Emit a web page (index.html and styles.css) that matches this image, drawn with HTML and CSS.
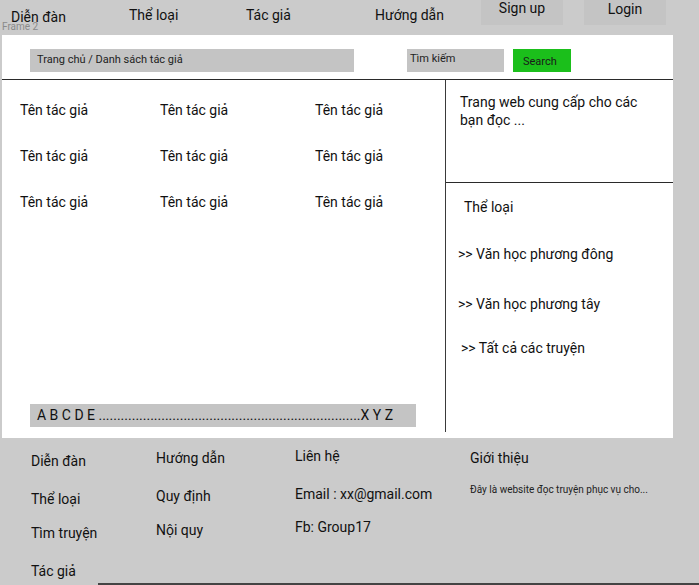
FILE: index.html
```html
<!DOCTYPE html>
<html lang="vi">
<head>
<meta charset="utf-8">
<title>Danh sách tác giả</title>
<link rel="stylesheet" href="styles.css">
</head>
<body>
<div class="page">
  <header class="topbar">
    <a class="nav nav-forum">Diễn đàn</a>
    <a class="nav nav-genre">Thể loại</a>
    <a class="nav nav-author">Tác giả</a>
    <a class="nav nav-guide">Hướng dẫn</a>
    <a class="btn-top btn-signup">Sign up</a>
    <a class="btn-top btn-login">Login</a>
    <span class="frame-label">Frame 2</span>
  </header>

  <main class="frame">
    <div class="toolbar">
      <div class="breadcrumb">Trang chủ / Danh sách tác giả</div>
      <div class="search-input">Tìm kiếm</div>
      <div class="search-btn">Search</div>
    </div>
    <div class="content">
      <section class="authors">
        <div class="author-grid">
          <div class="author">Tên tác giả</div>
          <div class="author">Tên tác giả</div>
          <div class="author">Tên tác giả</div>
          <div class="author">Tên tác giả</div>
          <div class="author">Tên tác giả</div>
          <div class="author">Tên tác giả</div>
          <div class="author">Tên tác giả</div>
          <div class="author">Tên tác giả</div>
          <div class="author">Tên tác giả</div>
        </div>
        <div class="alphabet">A B C D E .......................................................................X Y Z</div>
      </section>
      <aside class="sidebar">
        <div class="about">
          <p class="about-text">Trang web cung cấp cho các bạn đọc ...</p>
        </div>
        <div class="cats">
          <div class="cats-title">Thể loại</div>
          <div class="cat cat-east">&gt;&gt; Văn học phương đông</div>
          <div class="cat cat-west">&gt;&gt; Văn học phương tây</div>
          <div class="cat cat-all">&gt;&gt; Tất cả các truyện</div>
        </div>
      </aside>
    </div>
  </main>

  <footer class="footer">
    <div class="fcol fcol-1">
      <div class="fitem">Diễn đàn</div>
      <div class="fitem">Thể loại</div>
      <div class="fitem">Tìm truyện</div>
      <div class="fitem">Tác giả</div>
    </div>
    <div class="fcol fcol-2">
      <div class="fitem">Hướng dẫn</div>
      <div class="fitem">Quy định</div>
      <div class="fitem">Nội quy</div>
    </div>
    <div class="fcol fcol-3">
      <div class="fitem">Liên hệ</div>
      <div class="fitem">Email : xx@gmail.com</div>
      <div class="fitem">Fb: Group17</div>
    </div>
    <div class="fcol fcol-4">
      <div class="fitem">Giới thiệu</div>
      <div class="fsmall">Đây là website đọc truyện phục vụ cho...</div>
    </div>
  </footer>
  <div class="bottom-line"></div>
</div>
</body>
</html>
```

FILE: styles.css
```css
* { box-sizing: border-box; }
html, body { margin: 0; padding: 0; }
body {
  background: #cbcbcb;
  font-family: Roboto, "Noto Sans", sans-serif;
  color: #111;
  font-size: 14px;
}
.page {
  width: 699px;
  height: 585px;
  overflow: hidden;
  display: flex;
  flex-direction: column;
}

/* top bar */
.topbar {
  position: relative;
  height: 35px;
  display: flex;
  align-items: flex-start;
  padding-left: 11px;
}
.nav { line-height: 17px; color: #111; }
.nav-forum { width: 118px; margin-top: 9px; }
.nav-genre { width: 117px; margin-top: 7px; }
.nav-author { width: 129px; margin-top: 7px; }
.nav-guide { width: 106px; margin-top: 7px; }
.btn-top {
  width: 82px;
  height: 25px;
  background: #c4c4c4;
  text-align: center;
  line-height: 17px;
  padding-top: 0;
}
.btn-signup { margin-right: 21px; }
.btn-login { padding-top: 1px; }
.frame-label {
  position: absolute;
  left: 2px;
  top: 21px;
  font-size: 10px;
  line-height: 11px;
  color: #8a8a8a;
}

/* white frame */
.frame {
  margin-left: 2px;
  width: 671px;
  height: 403px;
  background: #fff;
  display: flex;
  flex-direction: column;
}
.toolbar {
  height: 45px;
  border-bottom: 1px solid #2a2a2a;
  display: flex;
  align-items: flex-start;
  padding: 14px 0 0 28px;
}
.breadcrumb {
  width: 324px;
  height: 23px;
  background: #c4c4c4;
  font-size: 11px;
  line-height: 21px;
  padding-left: 7px;
  color: #222;
}
.search-input {
  margin-left: 53px;
  width: 97px;
  height: 23px;
  background: #c4c4c4;
  font-size: 11px;
  line-height: 20px;
  padding-left: 3px;
  color: #222;
}
.search-btn {
  margin-left: 9px;
  width: 58px;
  height: 23px;
  background: #1bbf1b;
  font-size: 11px;
  line-height: 26px;
  padding-left: 10px;
  color: #1a1a1a;
}

.content {
  display: flex;
  height: 352px;
}
.authors {
  width: 443px;
  display: flex;
  flex-direction: column;
}
.author-grid {
  display: grid;
  grid-template-columns: 140px 155px 120px;
  grid-auto-rows: 46px;
  padding: 22px 0 0 18px;
}
.author { line-height: 17px; }
.alphabet {
  margin: auto 0 5px 28px;
  width: 386px;
  height: 23px;
  background: #c4c4c4;
  line-height: 23px;
  padding-left: 7px;
  white-space: nowrap;
  overflow: hidden;
}

.sidebar {
  width: 228px;
  border-left: 1px solid #3a3a3a;
  display: flex;
  flex-direction: column;
}
.about {
  height: 103px;
  border-bottom: 1px solid #2a2a2a;
  padding: 13px 0 0 14px;
}
.about-text {
  margin: 0;
  width: 195px;
  line-height: 18px;
}
.cats {
  display: flex;
  flex-direction: column;
  padding-top: 16px;
}
.cats-title { padding-left: 18px; line-height: 17px; margin-bottom: 30px; }
.cat { line-height: 17px; }
.cat-east { padding-left: 12px; margin-bottom: 33px; }
.cat-west { padding-left: 12px; margin-bottom: 27px; }
.cat-all { padding-left: 15px; }

/* footer */
.footer {
  height: 145px;
  display: flex;
  align-items: flex-start;
}
.fcol { display: flex; flex-direction: column; }
.fitem { line-height: 17px; }
.fcol-1 { width: 156px; padding: 15px 0 0 31px; gap: 21px; }
.fcol-1 .fitem:nth-child(3) { margin-top: -4px; }
.fcol-2 { width: 139px; padding-top: 12px; gap: 21px; }
.fcol-2 .fitem:nth-child(3) { margin-top: -4px; }
.fcol-3 { width: 175px; padding-top: 10px; gap: 21px; }
.fcol-3 .fitem:nth-child(3) { margin-top: -5px; }
.fcol-4 { padding-top: 12px; }
.fsmall { font-size: 10px; line-height: 12px; margin-top: 17px; color: #222; }

.bottom-line {
  margin-left: 98px;
  height: 2px;
  background: #444;
}
```
